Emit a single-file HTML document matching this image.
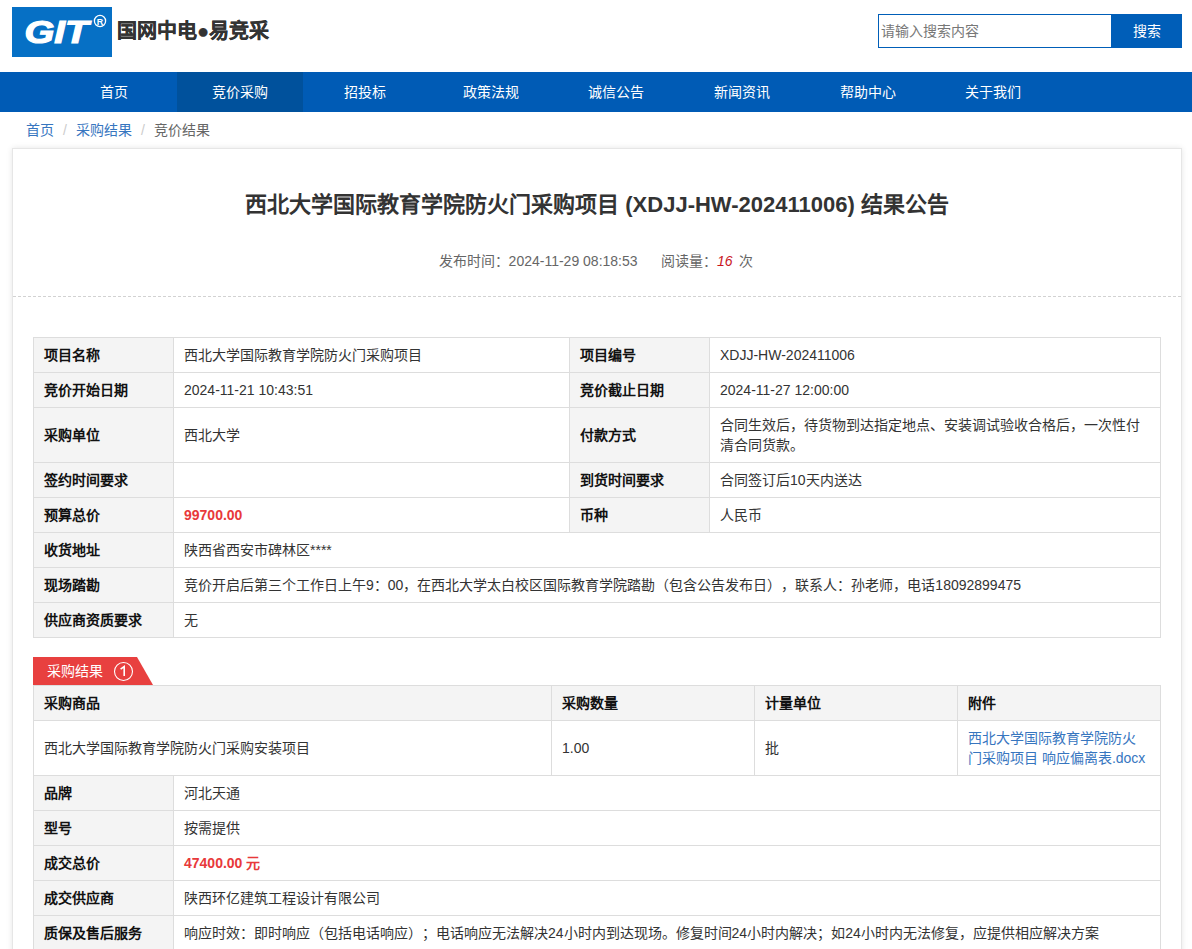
<!DOCTYPE html>
<html lang="zh-CN"><head><meta charset="utf-8">
<style>
*{margin:0;padding:0;box-sizing:border-box}
html,body{width:1192px;height:949px;overflow:hidden;background:#fff}
body{text-spacing-trim:space-all;font-family:"Liberation Sans",sans-serif;font-size:14px;color:#333;position:relative}
.abs{position:absolute}
#logo{left:12px;top:7px;width:100px;height:50px}
#brand{left:117px;top:16px;font-size:20px;font-weight:bold;-webkit-text-stroke:0.3px #333;color:#333;line-height:30px;white-space:nowrap}
#sinput{left:878px;top:14px;width:234px;height:34px;border:1px solid #005eb8;border-right:none}
#sinput span{position:absolute;left:2px;top:0;line-height:32px;color:#777;font-size:14px}
#sbtn{left:1111px;top:14px;width:71px;height:34px;background:#005eb8;color:#fff;text-align:center;line-height:34px;font-size:14px}
#nav{left:0;top:72px;width:1192px;height:40px;background:#005bb5}
#nav div{position:absolute;top:0;width:126px;height:40px;line-height:40px;text-align:center;color:#fff;font-size:14px}
#nav div.on{background:#00519c}
#crumb{left:26px;top:120px;line-height:20px;color:#666;font-size:14px;white-space:nowrap}
#crumb a{color:#3776bf;text-decoration:none}
#crumb i{font-style:normal;color:#ccc;padding:0 9px}
#card{left:12px;top:148px;width:1170px;height:900px;border:1px solid #e6e6e6;box-shadow:0 0 6px rgba(0,0,0,.1)}
#title{left:12px;top:187px;width:1170px;text-align:center;font-size:22px;font-weight:bold;color:#333;line-height:36px;white-space:nowrap}
#meta{left:11px;top:250px;width:1170px;text-align:center;font-size:14px;color:#666;line-height:22px;white-space:nowrap}
#meta em{color:#c9151e;font-style:italic;margin-right:3px}
#dash{left:13px;top:296px;width:1168px;height:0;border-top:1px dashed #d2d2d2}
table{position:absolute;border-collapse:collapse;table-layout:fixed;font-size:14px;color:#333}
td{border:1px solid #ddd;padding:0 10px;line-height:20px;vertical-align:middle}
td.l{background:#f4f4f4;font-weight:bold;color:#111}
.red{color:#e8393a;font-weight:bold}
#t1{left:33px;top:337px;width:1127px}
#t2{left:33px;top:685px;width:1127px}
#tab{left:33px;top:657px;width:120px;height:28px}
#tabtxt{left:47px;top:657px;line-height:28px;color:#fff;font-size:14px;white-space:nowrap}
#circ{left:114px;top:662px;width:19px;height:19px;border:1px solid #fff;border-radius:50%;color:#fff;font-size:13px;line-height:17px;text-align:center;-webkit-text-stroke:0.4px #fff}
a.link{color:#3776bf;text-decoration:none}
</style></head><body>
<svg class="abs" id="logo" width="100" height="50" viewBox="0 0 100 50"><rect width="100" height="50" fill="#0670c5"/><text x="12.5" y="36" fill="#fff" stroke="#fff" stroke-width="1.2" font-family="Liberation Sans" font-weight="bold" font-style="italic" font-size="31" textLength="64" lengthAdjust="spacingAndGlyphs">GIT</text><circle cx="88" cy="14" r="5.6" fill="none" stroke="#fff" stroke-width="1.3"/><text x="88.1" y="17.7" fill="#fff" font-family="Liberation Sans" font-weight="bold" font-size="9" text-anchor="middle">R</text></svg>
<div class="abs" id="brand">国网中电●易竞采</div>
<div class="abs" id="sinput"><span>请输入搜索内容</span></div>
<div class="abs" id="sbtn">搜索</div>
<div class="abs" id="nav">
<div style="left:51px"><span style="position:relative;left:0px">首页</span></div>
<div class="on" style="left:177px"><span style="position:relative;left:-0.5px">竞价采购</span></div>
<div style="left:303px"><span style="position:relative;left:-1px">招投标</span></div>
<div style="left:429px"><span style="position:relative;left:-1.5px">政策法规</span></div>
<div style="left:554px"><span style="position:relative;left:-1.5px">诚信公告</span></div>
<div style="left:680px"><span style="position:relative;left:-1px">新闻资讯</span></div>
<div style="left:806px"><span style="position:relative;left:-1.5px">帮助中心</span></div>
<div style="left:931px"><span style="position:relative;left:-1.5px">关于我们</span></div>
</div>
<div class="abs" id="crumb"><a>首页</a><i>/</i><a>采购结果</a><i>/</i>竞价结果</div>
<div class="abs" id="card"></div>
<div class="abs" id="title">西北大学国际教育学院防火门采购项目 (XDJJ-HW-202411006) 结果公告</div>
<div class="abs" id="meta">发布时间：2024-11-29 08:18:53 &nbsp; &nbsp; &nbsp;阅读量：<em>16</em> 次</div>
<div class="abs" id="dash"></div>

<table id="t1">
<colgroup><col style="width:140px"><col style="width:396px"><col style="width:140px"><col style="width:451px"></colgroup>
<tr style="height:35px"><td class="l">项目名称</td><td>西北大学国际教育学院防火门采购项目</td><td class="l">项目编号</td><td>XDJJ-HW-202411006</td></tr>
<tr style="height:35px"><td class="l">竞价开始日期</td><td>2024-11-21 10:43:51</td><td class="l">竞价截止日期</td><td>2024-11-27 12:00:00</td></tr>
<tr style="height:55px"><td class="l">采购单位</td><td>西北大学</td><td class="l">付款方式</td><td>合同生效后，待货物到达指定地点、安装调试验收合格后，一次性付清合同货款。</td></tr>
<tr style="height:35px"><td class="l">签约时间要求</td><td></td><td class="l">到货时间要求</td><td>合同签订后10天内送达</td></tr>
<tr style="height:35px"><td class="l">预算总价</td><td class="red">99700.00</td><td class="l">币种</td><td>人民币</td></tr>
<tr style="height:35px"><td class="l">收货地址</td><td colspan="3">陕西省西安市碑林区****</td></tr>
<tr style="height:35px"><td class="l">现场踏勘</td><td colspan="3">竞价开启后第三个工作日上午9：00，在西北大学太白校区国际教育学院踏勘（包含公告发布日），联系人：孙老师，电话18092899475</td></tr>
<tr style="height:35px"><td class="l">供应商资质要求</td><td colspan="3">无</td></tr>
</table>

<svg class="abs" id="tab" viewBox="0 0 120 28"><polygon points="0,0 104,0 120,28 0,28" fill="#e8403f"/></svg>
<div class="abs" id="tabtxt">采购结果</div>
<svg class="abs" style="left:113px;top:661px" width="21" height="21" viewBox="0 0 21 21"><circle cx="10.5" cy="10.5" r="9" fill="none" stroke="#fff" stroke-width="1.1"/><path d="M7.6 8.2 L11.2 5.6 L11.2 15" fill="none" stroke="#fff" stroke-width="1.6" stroke-linejoin="miter"/></svg>

<table id="t2">
<colgroup><col style="width:140px"><col style="width:378px"><col style="width:203px"><col style="width:203px"><col style="width:203px"></colgroup>
<tr style="height:35px"><td class="l" colspan="2">采购商品</td><td class="l">采购数量</td><td class="l">计量单位</td><td class="l">附件</td></tr>
<tr style="height:55px"><td colspan="2">西北大学国际教育学院防火门采购安装项目</td><td>1.00</td><td>批</td><td><a class="link">西北大学国际教育学院防火<br>门采购项目 响应偏离表.docx</a></td></tr>
<tr style="height:35px"><td class="l">品牌</td><td colspan="4">河北天通</td></tr>
<tr style="height:35px"><td class="l">型号</td><td colspan="4">按需提供</td></tr>
<tr style="height:35px"><td class="l">成交总价</td><td colspan="4" class="red">47400.00 元</td></tr>
<tr style="height:35px"><td class="l">成交供应商</td><td colspan="4">陕西环亿建筑工程设计有限公司</td></tr>
<tr style="height:35px"><td class="l">质保及售后服务</td><td colspan="4">响应时效：即时响应（包括电话响应）；电话响应无法解决24小时内到达现场。修复时间24小时内解决；如24小时内无法修复，应提供相应解决方案</td></tr>
</table>
</body></html>
